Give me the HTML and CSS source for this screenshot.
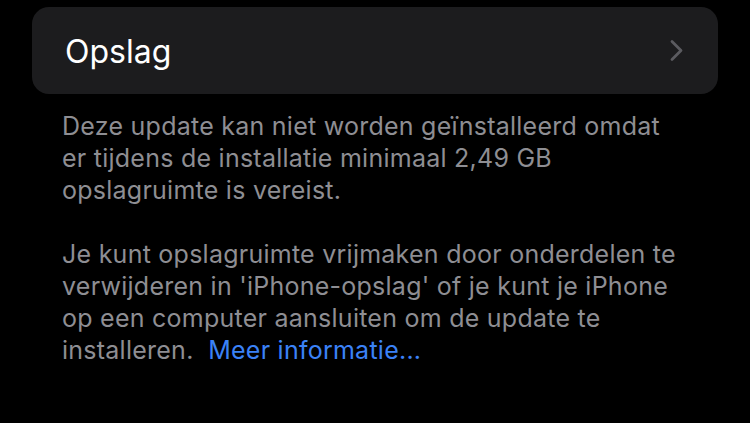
FILE: index.html
```html
<!DOCTYPE html>
<html lang="nl">
<head>
  <meta charset="UTF-8" />
  <meta name="viewport" content="width=device-width, initial-scale=1.0"/>
  <title>Opslag</title>
  <link rel="stylesheet" href="styles.css">
</head>
<body>

  <div class="page">
    <div class="row">
      <span class="row-title">Opslag</span>
      <svg class="chevron" width="15" height="25" viewBox="0 0 15 25">
        <path d="M3 3.5 L12 12.5 L3 21.5" fill="none" stroke="#5b5b60" stroke-width="2.8" stroke-linecap="round" stroke-linejoin="round"/>
      </svg>
    </div>

    <div class="notes">
      <p>Deze update kan niet worden geïnstalleerd omdat er tijdens de installatie minimaal 2,49 GB opslagruimte is vereist.</p>
      <p>Je kunt opslagruimte vrijmaken door onderdelen te verwijderen in 'iPhone-opslag' of je kunt je iPhone op een computer aansluiten om de update te installeren.&nbsp; <a href="#" class="more">Meer informatie...</a></p>
    </div>
  </div>

</body>
</html>
```

FILE: styles.css
```css
* { margin: 0; padding: 0; box-sizing: border-box; }

body {
  font-family: 'Inter', 'Noto Sans', sans-serif;
  background: #000;
  height: 100vh;
  overflow: hidden;
}

.page {
  padding: 7px 32px 0;
}

.row {
  height: 87px;
  background: #1c1c1e;
  border-radius: 17px;
  display: flex;
  align-items: center;
  justify-content: space-between;
  padding: 0 34px 0 33px;
}

.row-title {
  color: #fff;
  font-size: 32px;
  letter-spacing: 0;
  margin-top: 2px;
}

.chevron {
  display: block;
}

.notes {
  width: 655px;
  padding: 16px 0 0 30px;
  color: #8e8e93;
  font-size: 25px;
  letter-spacing: 0.25px;
  line-height: 32px;
}

.notes p {
  margin-bottom: 32px;
}

.more {
  color: #3b82f7;
  text-decoration: none;
}
```
